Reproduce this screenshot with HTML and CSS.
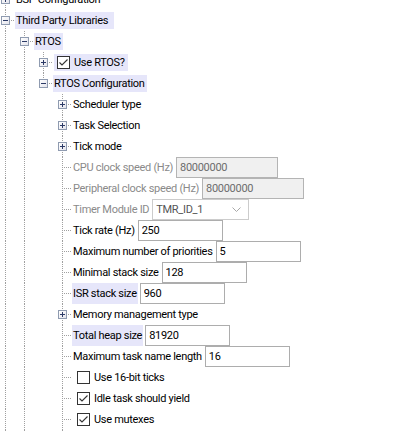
FILE: index.html
```html
<!DOCTYPE html>
<html>
<head>
<meta charset="utf-8">
<link rel="stylesheet" href="styles.css">
</head>
<body>
<div class="tree">
  <div class="row">
    <span class="c"><span class="exp plus"></span></span>
    <span class="node">BSP Configuration</span>
  </div>
  <div class="row">
    <span class="c"><span class="exp"></span></span>
    <span class="node hl wide-hl">Third Party Libraries</span>
  </div>
  <div class="row">
    <span class="g on"></span>
    <span class="c"><span class="exp"></span></span>
    <span class="node hl">RTOS</span>
  </div>
  <div class="row">
    <span class="g on"></span><span class="g on"></span>
    <span class="c"><span class="exp plus"></span></span>
    <span class="node chk hl"><span class="box on"><svg viewBox="0 0 11 11"><polyline points="1.5,5.5 4,8 9.5,2.5"/></svg></span>Use RTOS?</span>
  </div>
  <div class="row">
    <span class="g on"></span><span class="g on"></span>
    <span class="c last"><span class="exp"></span></span>
    <span class="node hl">RTOS Configuration</span>
  </div>
  <div class="row">
    <span class="g on"></span><span class="g on"></span><span class="g"></span>
    <span class="c"><span class="exp plus"></span></span>
    <span class="node">Scheduler type</span>
  </div>
  <div class="row">
    <span class="g on"></span><span class="g on"></span><span class="g"></span>
    <span class="c"><span class="exp plus"></span></span>
    <span class="node">Task Selection</span>
  </div>
  <div class="row">
    <span class="g on"></span><span class="g on"></span><span class="g"></span>
    <span class="c"><span class="exp plus"></span></span>
    <span class="node">Tick mode</span>
  </div>
  <div class="row">
    <span class="g on"></span><span class="g on"></span><span class="g"></span>
    <span class="c"></span>
    <span class="lbl dis">CPU clock speed (Hz)</span>
    <input class="tb wide" type="text" value="80000000" disabled>
  </div>
  <div class="row">
    <span class="g on"></span><span class="g on"></span><span class="g"></span>
    <span class="c"></span>
    <span class="lbl dis">Peripheral clock speed (Hz)</span>
    <input class="tb wide" type="text" value="80000000" disabled>
  </div>
  <div class="row">
    <span class="g on"></span><span class="g on"></span><span class="g"></span>
    <span class="c"></span>
    <span class="lbl dis">Timer Module ID</span>
    <span class="combo"><span class="combo-text">TMR_ID_1</span><svg class="chev" viewBox="0 0 9 5"><polyline points="0.5,0.5 4.5,4.5 8.5,0.5"/></svg></span>
  </div>
  <div class="row">
    <span class="g on"></span><span class="g on"></span><span class="g"></span>
    <span class="c"></span>
    <span class="lbl">Tick rate (Hz)</span>
    <input class="tb" type="text" value="250">
  </div>
  <div class="row">
    <span class="g on"></span><span class="g on"></span><span class="g"></span>
    <span class="c"></span>
    <span class="lbl">Maximum number of priorities</span>
    <input class="tb" type="text" value="5">
  </div>
  <div class="row">
    <span class="g on"></span><span class="g on"></span><span class="g"></span>
    <span class="c"></span>
    <span class="lbl">Minimal stack size</span>
    <input class="tb" type="text" value="128">
  </div>
  <div class="row">
    <span class="g on"></span><span class="g on"></span><span class="g"></span>
    <span class="c"></span>
    <span class="lbl hl">ISR stack size</span>
    <input class="tb" type="text" value="960">
  </div>
  <div class="row">
    <span class="g on"></span><span class="g on"></span><span class="g"></span>
    <span class="c"><span class="exp plus"></span></span>
    <span class="node">Memory management type</span>
  </div>
  <div class="row">
    <span class="g on"></span><span class="g on"></span><span class="g"></span>
    <span class="c"></span>
    <span class="lbl hl">Total heap size</span>
    <input class="tb" type="text" value="81920">
  </div>
  <div class="row">
    <span class="g on"></span><span class="g on"></span><span class="g"></span>
    <span class="c"></span>
    <span class="lbl">Maximum task name length</span>
    <input class="tb" type="text" value="16">
  </div>
  <div class="row">
    <span class="g on"></span><span class="g on"></span><span class="g"></span>
    <span class="c"></span>
    <span class="node chk leaf"><span class="box"></span>Use 16-bit ticks</span>
  </div>
  <div class="row">
    <span class="g on"></span><span class="g on"></span><span class="g"></span>
    <span class="c"></span>
    <span class="node chk leaf"><span class="box on"><svg viewBox="0 0 11 11"><polyline points="1.5,5.5 4,8 9.5,2.5"/></svg></span>Idle task should yield</span>
  </div>
  <div class="row">
    <span class="g on"></span><span class="g on"></span><span class="g"></span>
    <span class="c"></span>
    <span class="node chk leaf"><span class="box on"><svg viewBox="0 0 11 11"><polyline points="1.5,5.5 4,8 9.5,2.5"/></svg></span>Use mutexes</span>
  </div>
  <div class="row">
    <span class="g on"></span><span class="g on"></span><span class="g"></span>
    <span class="c"></span>
  </div>
</div>
</body>
</html>
```

FILE: styles.css
```css
html, body {
  margin: 0;
  padding: 0;
  background: #ffffff;
  overflow: hidden;
}

body {
  font-family: Roboto, "Liberation Sans", sans-serif;
  font-size: 11px;
  letter-spacing: -0.3px;
  color: #000000;
}

.tree {
  margin-top: -11px;
}

.row {
  display: flex;
  align-items: center;
  height: 21px;
  white-space: nowrap;
}

.g {
  flex: none;
  width: 19px;
  height: 21px;
}

.g.on {
  background: repeating-linear-gradient(to bottom, #a0a0a0 0 1px, transparent 1px 2px) 5px 0 / 1px 100% no-repeat;
}

.c {
  flex: none;
  position: relative;
  width: 15px;
  height: 21px;
  background:
    repeating-linear-gradient(to bottom, #a0a0a0 0 1px, transparent 1px 2px) 5px 0 / 1px 100% no-repeat,
    repeating-linear-gradient(to right, #a0a0a0 0 1px, transparent 1px 2px) 7px 10px / 8px 1px no-repeat;
}

.c.last {
  background:
    repeating-linear-gradient(to bottom, #a0a0a0 0 1px, transparent 1px 2px) 5px 0 / 1px 11px no-repeat,
    repeating-linear-gradient(to right, #a0a0a0 0 1px, transparent 1px 2px) 7px 10px / 8px 1px no-repeat;
}

.exp {
  position: absolute;
  left: 1px;
  top: 6px;
  width: 9px;
  height: 9px;
  box-sizing: border-box;
  border: 1px solid #8f9bb0;
  background: linear-gradient(135deg, #ffffff 0%, #e4e4ec 100%);
}

.exp::before {
  content: "";
  position: absolute;
  left: 1px;
  top: 3px;
  width: 5px;
  height: 1px;
  background: #2c3a66;
}

.exp.plus::after {
  content: "";
  position: absolute;
  left: 3px;
  top: 1px;
  width: 1px;
  height: 5px;
  background: #2c3a66;
}

.node {
  display: flex;
  align-items: center;
  height: 17px;
  padding: 0 2px 0 1px;
}

.node.wide-hl {
  padding-right: 6px;
}

.hl {
  background: #e6e6fa;
}

.node.chk {
  margin-left: 1px;
  padding-left: 3px;
  padding-right: 3px;
}

.node.chk.leaf {
  margin-left: 2px;
  padding-left: 3px;
}

.box {
  flex: none;
  width: 13px;
  height: 13px;
  box-sizing: border-box;
  border: 1px solid #333333;
  background: #ffffff;
  margin-right: 4px;
  display: flex;
}

.box svg {
  width: 11px;
  height: 11px;
  fill: none;
  stroke: #333333;
  stroke-width: 1.1;
}

.lbl {
  display: flex;
  align-items: center;
  height: 21px;
  padding: 0 1px 0 1px;
  margin-right: 2px;
}

.lbl.dis {
  color: #8a8a8a;
}

.tb {
  flex: none;
  box-sizing: border-box;
  width: 85px;
  height: 21px;
  margin: 0;
  padding: 0 0 0 3px;
  border: 1px solid #adadad;
  border-radius: 0;
  background: #ffffff;
  color: #000000;
  font: inherit;
  letter-spacing: inherit;
  outline: none;
}

.tb.wide {
  width: 102px;
  background: #f0f0f0;
  border-color: #b4b4b4;
  color: #6d6d6d;
}

.combo {
  flex: none;
  display: flex;
  align-items: center;
  box-sizing: border-box;
  width: 97px;
  height: 21px;
  padding: 0 7px 0 3px;
  border: 1px solid #cccccc;
  background: #ffffff;
  color: #555555;
}

.combo-text {
  flex: 1;
}

.chev {
  width: 9px;
  height: 5px;
  fill: none;
  stroke: #a8a8a8;
  stroke-width: 1;
}
```
